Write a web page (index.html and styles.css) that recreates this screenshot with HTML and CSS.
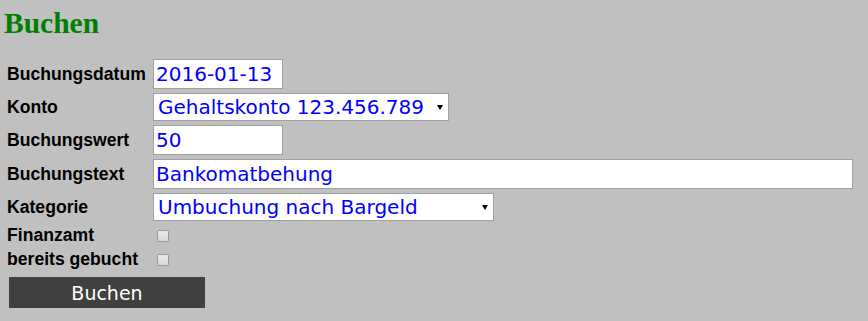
FILE: index.html
```html
<!DOCTYPE html>
<html lang="de">
<head>
<meta charset="utf-8">
<title>Buchen</title>
<link rel="stylesheet" href="styles.css">
</head>
<body>
<h1 class="title">Buchen</h1>
<form class="form">
  <label class="lbl" for="datum">Buchungsdatum</label>
  <div class="field"><input class="inp inp-short" id="datum" type="text" value="2016-01-13"></div>

  <label class="lbl" for="konto">Konto</label>
  <div class="field"><div class="sel-wrap sel-konto"><select class="sel" id="konto"><option>Gehaltskonto 123.456.789</option></select></div></div>

  <label class="lbl" for="wert">Buchungswert</label>
  <div class="field"><input class="inp inp-short" id="wert" type="text" value="50"></div>

  <label class="lbl" for="text">Buchungstext</label>
  <div class="field"><input class="inp inp-long" id="text" type="text" value="Bankomatbehung"></div>

  <label class="lbl" for="kat">Kategorie</label>
  <div class="field"><div class="sel-wrap sel-kat"><select class="sel" id="kat"><option>Umbuchung nach Bargeld</option></select></div></div>

  <label class="lbl lbl-small" for="fa">Finanzamt</label>
  <div class="field"><input class="chk" id="fa" type="checkbox"></div>

  <label class="lbl lbl-small" for="gb">bereits gebucht</label>
  <div class="field"><input class="chk" id="gb" type="checkbox"></div>

  <div class="actions"><button class="btn" type="button">Buchen</button></div>
</form>
</body>
</html>
```

FILE: styles.css
```css
html, body {
  margin: 0;
  padding: 0;
  background: #c0c0c0;
}

body {
  font-family: "Liberation Sans", Arial, sans-serif;
}

.title {
  margin: 6px 0 0 4px;
  font-family: "Liberation Serif", "Times New Roman", serif;
  font-weight: bold;
  font-size: 29.5px;
  line-height: 34px;
  color: #008000;
}

.form {
  display: grid;
  grid-template-columns: 142px auto;
  grid-template-rows: 30px 28px 30px 30px 28px 20px 20px auto;
  column-gap: 4px;
  row-gap: 4px;
  margin: 19px 0 0 7px;
  align-items: center;
}

.lbl {
  font-weight: bold;
  font-size: 17.6px;
  line-height: 20px;
  color: #000;
  white-space: nowrap;
}

.field {
  display: flex;
  align-items: center;
  height: 100%;
}

.inp,
.sel {
  box-sizing: border-box;
  margin: 0;
  border: 1px solid #a0a0a0;
  border-radius: 0;
  background: #fff;
  color: #0000ff;
  font-family: "DejaVu Sans", Verdana, sans-serif;
  font-size: 20px;
  outline: none;
}

.inp {
  height: 30px;
  padding: 0 2px;
}

.inp-short { width: 130px; }
.inp-long { width: 700px; }

.sel-wrap {
  position: relative;
  height: 28px;
}

.sel-konto { width: 296px; }
.sel-kat { width: 341px; }

.sel {
  -webkit-appearance: none;
  appearance: none;
  width: 100%;
  height: 28px;
  padding: 0 16px 0 4px;
}

.sel-wrap::after {
  content: "";
  position: absolute;
  right: 6px;
  top: 12px;
  width: 0;
  height: 0;
  border-left: 3.5px solid transparent;
  border-right: 3.5px solid transparent;
  border-top: 5px solid #000;
  pointer-events: none;
}

.chk {
  -webkit-appearance: none;
  appearance: none;
  box-sizing: border-box;
  width: 12px;
  height: 12px;
  margin: 1px 0 0 4px;
  border: 1px solid #9c9c9c;
  border-radius: 2px;
  background: linear-gradient(#ececec, #d8d8d8);
}

.actions {
  grid-column: 1 / span 2;
  margin-top: 4px;
}

.btn {
  box-sizing: border-box;
  width: 196px;
  height: 31px;
  margin: 0 0 0 2px;
  padding: 0;
  border: none;
  background: #404040;
  color: #fff;
  font-family: "DejaVu Sans", Verdana, sans-serif;
  font-size: 19px;
  cursor: pointer;
}
```
